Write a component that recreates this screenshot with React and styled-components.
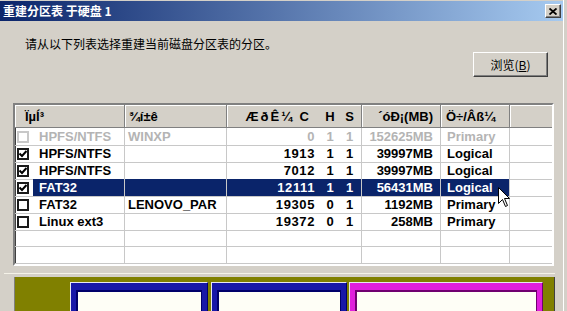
import React from "react";
import styled, { createGlobalStyle } from "styled-components";

const GlobalStyle = createGlobalStyle`
  html, body {
    margin: 0;
    padding: 0;
    background: #d4d0c8;
  }
  body {
    width: 567px;
    height: 311px;
    overflow: hidden;
    font-family: "Liberation Sans", "Noto Sans CJK SC", sans-serif;
  }
`;

const COLS = "110px 102px 135px 79px 69px 1fr";

const Window = styled.div`
  position: relative;
  width: 567px;
  height: 311px;
  box-sizing: border-box;
  padding-right: 4px;
  overflow: hidden;
  background: #d4d0c8;
  box-shadow: inset -3px 0 0 #d4d0c8, inset -4px 0 0 #ffffff;
  display: flex;
  flex-direction: column;
  & > * {
    flex-shrink: 0;
  }
`;

const TitleBar = styled.div`
  height: 20px;
  margin-top: 1px;
  padding: 0 2px 0 3px;
  display: flex;
  align-items: center;
  justify-content: space-between;
  background: linear-gradient(to right, #0a246a, #a6caf0);
`;

const Title = styled.span`
  color: #ffffff;
  font: bold 12px/14px "Noto Sans CJK SC", sans-serif;
  white-space: pre;
`;

const CloseButton = styled.div`
  width: 16px;
  height: 14px;
  box-sizing: border-box;
  background: #d4d0c8;
  border: 1px solid;
  border-color: #ffffff #404040 #404040 #ffffff;
  box-shadow: inset -1px -1px 0 #808080;
  display: flex;
  align-items: center;
  justify-content: center;
`;

const Body = styled.div`
  display: flex;
  flex-direction: column;
  & > * {
    flex-shrink: 0;
  }
`;

const Prompt = styled.div`
  margin: 16px 0 0 25px;
  font: 12px/14px "Noto Sans CJK SC", sans-serif;
  color: #000000;
`;

const ButtonRow = styled.div`
  display: flex;
  justify-content: flex-end;
  padding-right: 15px;
  margin-top: 1px;
`;

const PushButton = styled.button`
  width: 75px;
  height: 25px;
  box-sizing: border-box;
  padding: 0;
  background: #d4d0c8;
  border: 1px solid;
  border-color: #ffffff #404040 #404040 #ffffff;
  box-shadow: inset -1px -1px 0 #808080;
  font: 12px/14px "Noto Sans CJK SC", sans-serif;
  color: #000000;
  u {
    text-decoration: underline;
  }
`;

const ListBox = styled.div`
  margin: 26px 0 0 13px;
  width: 541px;
  box-sizing: border-box;
  border: 2px solid;
  border-color: #808080 #ffffff #ffffff #808080;
  background: #ffffff;
  box-shadow: inset 1px 1px 0 #404040;
  font: bold 13px/16px "Liberation Sans", sans-serif;
`;

const HeaderRow = styled.div`
  display: grid;
  grid-template-columns: ${COLS};
  height: 23px;
  background: #d4d0c8;
`;

const HeadCell = styled.div`
  display: flex;
  align-items: center;
  justify-content: ${(p) => (p.$right ? "flex-end" : "flex-start")};
  padding: 1px ${(p) => p.$pr || 0}px 0 ${(p) => p.$pl || 0}px;
  box-sizing: border-box;
  border-right: ${(p) => (p.$last ? "none" : "1px solid #808080")};
  border-bottom: 1px solid #808080;
  box-shadow: inset 1px 1px 0 #ffffff;
  color: #000000;
  white-space: pre;
  overflow: hidden;
`;

const Row = styled.div`
  display: grid;
  grid-template-columns: ${COLS};
  height: 17px;
`;

const Cell = styled.div`
  display: flex;
  align-items: center;
  justify-content: ${(p) => (p.$right ? "flex-end" : "flex-start")};
  padding: 1px ${(p) => p.$pr || 0}px 0 ${(p) => p.$pl || 0}px;
  box-sizing: border-box;
  border-right: ${(p) => (p.$last ? "none" : "1px solid #c8c8c8")};
  border-bottom: 1px solid #c8c8c8;
  background: ${(p) => (p.$sel ? "#0a246a" : "transparent")};
  color: ${(p) => (p.$sel ? "#ffffff" : p.$dim ? "#b4b4b4" : "#000000")};
  white-space: pre;
  overflow: hidden;
`;

const TypeCell = styled.div`
  display: flex;
  align-items: stretch;
  border-right: 1px solid #c8c8c8;
  border-bottom: 1px solid #c8c8c8;
  overflow: hidden;
`;

const CheckSlot = styled.div`
  width: 18px;
  display: flex;
  align-items: center;
  padding-left: 2px;
  box-sizing: border-box;
`;

const Box = styled.div`
  width: 12px;
  height: 12px;
  box-sizing: border-box;
  border: 2px solid ${(p) => (p.$dim ? "#c8c8c8" : "#1a1a1a")};
  background: #ffffff;
  display: flex;
  align-items: center;
  justify-content: center;
`;

const TypeText = styled.div`
  flex: 1;
  display: flex;
  align-items: center;
  padding: 1px 0 0 6px;
  background: ${(p) => (p.$sel ? "#0a246a" : "transparent")};
  color: ${(p) => (p.$sel ? "#ffffff" : p.$dim ? "#b4b4b4" : "#000000")};
  white-space: pre;
`;

const Chs = styled.div`
  display: grid;
  grid-template-columns: 95px 16px 1fr;
  padding-top: 1px;
  border-right: 1px solid ${(p) => (p.$head ? "#808080" : "#c8c8c8")};
  border-bottom: 1px solid ${(p) => (p.$head ? "#808080" : "#c8c8c8")};
  background: ${(p) => (p.$head ? "#d4d0c8" : p.$sel ? "#0a246a" : "transparent")};
  box-shadow: ${(p) => (p.$head ? "inset 1px 1px 0 #ffffff" : "none")};
  color: ${(p) => (p.$sel ? "#ffffff" : p.$dim ? "#b4b4b4" : "#000000")};
`;

const ChsPart = styled.span`
  display: flex;
  align-items: center;
  justify-content: ${(p) => (p.$center ? "center" : "flex-end")};
  padding-right: ${(p) => p.$pr || 0}px;
  letter-spacing: ${(p) => p.$ls || 0}px;
  white-space: pre;
`;

const Splitter = styled.div`
  height: 7px;
  margin: 0 8px 3px 4px;
  border-bottom: 1px solid #f4f2e8;
`;

const MapPanel = styled.div`
  margin-left: 14px;
  width: 541px;
  height: 60px;
  box-sizing: border-box;
  background: #808000;
  border-left: 1px solid #808080;
  border-right: 1px solid #404040;
  padding: 5px 0 0 55px;
  display: flex;
  align-items: flex-start;
`;

const Part = styled.div`
  width: ${(p) => p.$w}px;
  height: 60px;
  margin-right: ${(p) => p.$gap || 0}px;
  box-sizing: border-box;
  border: 1px solid #e8e8f0;
  border-right-color: ${(p) => p.$edge};
  border-bottom: none;
  background: #fefef6;
  box-shadow: inset 0 7px 0 ${(p) => p.$c}, inset 5px 0 0 ${(p) => p.$c},
    inset -5px 0 0 ${(p) => p.$c}, inset 0 9px 0 ${(p) => p.$edge},
    inset 7px 0 0 ${(p) => p.$edge}, inset -6px 0 0 ${(p) => p.$edge};
`;

const Cursor = styled.svg`
  position: absolute;
  left: 498px;
  top: 187px;
`;

const rows = [
  { dim: true, on: false, type: "HPFS/NTFS", label: "WINXP", c: "0", h: "1", s: "1", size: "152625MB", kind: "Primary" },
  { on: true, type: "HPFS/NTFS", label: "", c: "1913", h: "1", s: "1", size: "39997MB", kind: "Logical" },
  { on: true, type: "HPFS/NTFS", label: "", c: "7012", h: "1", s: "1", size: "39997MB", kind: "Logical" },
  { on: true, sel: true, type: "FAT32", label: "", c: "12111", h: "1", s: "1", size: "56431MB", kind: "Logical" },
  { on: false, type: "FAT32", label: "LENOVO_PAR", c: "19305", h: "0", s: "1", size: "1192MB", kind: "Primary" },
  { on: false, type: "Linux ext3", label: "", c: "19372", h: "0", s: "1", size: "258MB", kind: "Primary" },
];

function Check({ on, dim }) {
  return (
    <Box $dim={dim}>
      {on && (
        <svg width="8" height="8" viewBox="0 0 8 8">
          <polyline points="0.5,3.5 3,6 7.5,1" fill="none" stroke="#000" strokeWidth="2" />
        </svg>
      )}
    </Box>
  );
}

function PartitionRow({ r }) {
  return (
    <Row>
      <TypeCell>
        <CheckSlot>{r.type && <Check on={r.on} dim={r.dim} />}</CheckSlot>
        <TypeText $sel={r.sel} $dim={r.dim}>{r.type}</TypeText>
      </TypeCell>
      <Cell $pl={3} $sel={r.sel} $dim={r.dim}>{r.label}</Cell>
      <Chs $sel={r.sel} $dim={r.dim}>
        <ChsPart $pr={7} $ls={0.6}>{r.c}</ChsPart>
        <ChsPart $center>{r.h}</ChsPart>
        <ChsPart $center>{r.s}</ChsPart>
      </Chs>
      <Cell $right $pr={7} $sel={r.sel} $dim={r.dim}>{r.size}</Cell>
      <Cell $pl={6} $sel={r.sel} $dim={r.dim}>{r.kind}</Cell>
      <Cell $last />
    </Row>
  );
}

export default function App() {
  return (
    <>
      <GlobalStyle />
      <Window>
        <TitleBar>
          <Title>重建分区表 于硬盘 1</Title>
          <CloseButton>
            <svg width="8" height="7" viewBox="0 0 8 7">
              <path d="M0.5 0.5 L7.5 6.5 M7.5 0.5 L0.5 6.5" stroke="#000" strokeWidth="1.8" />
            </svg>
          </CloseButton>
        </TitleBar>
        <Body>
          <Prompt>请从以下列表选择重建当前磁盘分区表的分区。</Prompt>
          <ButtonRow>
            <PushButton>
              浏览(<u>B</u>)
            </PushButton>
          </ButtonRow>
          <ListBox>
            <HeaderRow>
              <HeadCell $pl={10}>ÏµÍ³</HeadCell>
              <HeadCell $pl={4}>¾í±ê</HeadCell>
              <Chs $head>
                <ChsPart $pr={11} $ls={2}>ÆðÊ¼ C</ChsPart>
                <ChsPart $center>H</ChsPart>
                <ChsPart $center>S</ChsPart>
              </Chs>
              <HeadCell $right $pr={7}>´óÐ¡(MB)</HeadCell>
              <HeadCell $pl={5}>Ö÷/Âß¼­</HeadCell>
              <HeadCell $last />
            </HeaderRow>
            {rows.map((r, i) => (
              <PartitionRow key={i} r={r} />
            ))}
            <PartitionRow r={{}} />
            <PartitionRow r={{}} />
          </ListBox>
          <Splitter />
          <MapPanel>
            <Part $w={138} $gap={3} $c="#1818a8" $edge="#00006a" />
            <Part $w={136} $gap={2} $c="#1818a8" $edge="#00006a" />
            <Part $w={194} $c="#e020dc" $edge="#700070" />
          </MapPanel>
        </Body>
        <Cursor width="13" height="21" viewBox="0 0 13 21">
          <path d="M0.5 0.5 L0.5 16.5 L4.5 12.5 L7.5 19.5 L9.5 18.5 L6.5 11.5 L11.5 11.5 Z" fill="#fff" stroke="#000" strokeWidth="1" />
        </Cursor>
      </Window>
    </>
  );
}
